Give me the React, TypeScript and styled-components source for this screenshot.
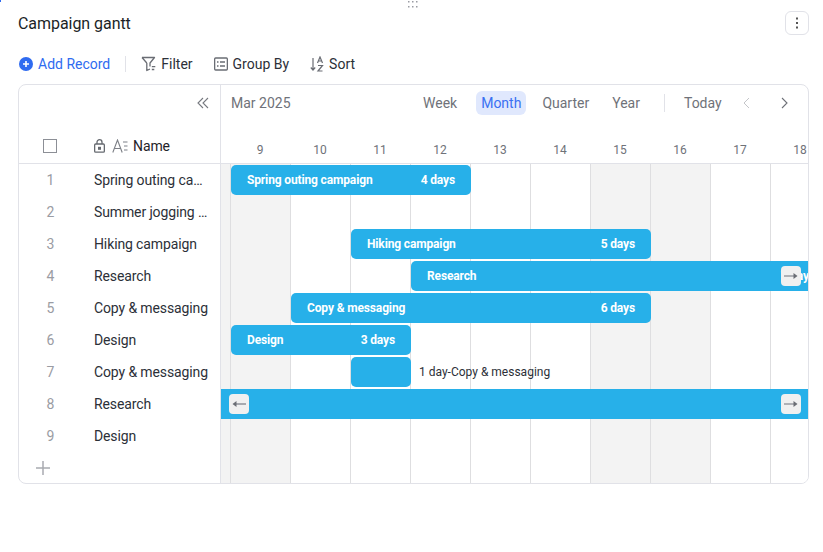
import React from "react";
import styled, { createGlobalStyle } from "styled-components";

const Global = createGlobalStyle`
  html, body { margin: 0; padding: 0; background: #fff; }
  body { font-family: Roboto, "Liberation Sans", sans-serif; color: #1f2329; }
  * { box-sizing: border-box; }
`;

const Page = styled.div`
  position: relative;
  width: 823px;
  height: 552px;
  padding: 0 14px 0 18px;
  overflow: hidden;
`;
const CornerMark = styled.div`
  position: absolute;
  left: 0;
  top: 0;
  width: 1px;
  height: 2px;
  background: #2f6bf0;
`;
const DragHandle = styled.svg`
  position: absolute;
  left: 408px;
  top: 1px;
`;
const TitleRow = styled.div`
  height: 46px;
  padding-top: 11px;
  display: flex;
  justify-content: space-between;
  align-items: flex-start;
`;
const Title = styled.div`
  font-size: 16px;
  line-height: 26px;
  letter-spacing: -0.05px;
  color: #1b1f26;
`;
const MoreButton = styled.div`
  width: 24px;
  height: 24px;
  border: 1px solid #e1e2e8;
  border-radius: 6px;
  display: flex;
  align-items: center;
  justify-content: center;
`;
const Toolbar = styled.div`
  height: 38px;
  padding: 0 0 2px 1px;
  display: flex;
  align-items: center;
`;
const ToolItem = styled.div<{ $blue?: boolean; $mr: number }>`
  display: flex;
  align-items: center;
  gap: 5px;
  font-size: 14px;
  color: ${(p) => (p.$blue ? "#2f6bf0" : "#2c3038")};
  margin-right: ${(p) => p.$mr}px;
`;
const ToolDivider = styled.div`
  width: 1px;
  height: 16px;
  background: #e1e2e8;
  margin-right: 15px;
`;
const Card = styled.div`
  width: 791px;
  height: 400px;
  border: 1px solid #e1e2e8;
  border-radius: 8px;
  display: flex;
  overflow: hidden;
`;
const LeftPane = styled.div`
  width: 202px;
  flex: none;
  border-right: 1px solid #e1e2e8;
`;
const LeftHeader = styled.div`
  height: 79px;
  border-bottom: 1px solid #e1e2e8;
  display: flex;
  flex-direction: column;
`;
const CollapseRow = styled.div`
  height: 36px;
  display: flex;
  justify-content: flex-end;
  align-items: center;
  padding-right: 11px;
`;
const ColumnRow = styled.div`
  height: 42px;
  display: flex;
  align-items: center;
  padding: 7px 0 0 24px;
`;
const CheckBox = styled.div`
  width: 14px;
  height: 14px;
  border: 1px solid #8c8f96;
  margin-right: 37px;
`;
const IconGap = styled.span`
  width: 7px;
`;
const NameLabel = styled.span`
  font-size: 14px;
  letter-spacing: -0.1px;
  color: #1f2329;
  margin-left: 5px;
`;
const Row = styled.div`
  height: 32px;
  display: flex;
  align-items: center;
`;
const RowNumber = styled.div`
  width: 63px;
  text-align: center;
  font-size: 14px;
  color: #9a9ca3;
`;
const RowName = styled.div`
  margin-left: 12px;
  width: 115px;
  font-size: 14px;
  letter-spacing: -0.12px;
  color: #2c3038;
  white-space: nowrap;
  overflow: hidden;
  text-overflow: ellipsis;
`;
const AddRow = styled.div`
  height: 31px;
  padding-left: 17px;
  display: flex;
  align-items: center;
`;
const RightPane = styled.div`
  flex: 1;
  min-width: 0;
  display: flex;
  flex-direction: column;
`;
const RightHeader = styled.div`
  height: 79px;
  flex: none;
  border-bottom: 1px solid #e1e2e8;
  overflow: hidden;
`;
const Controls = styled.div`
  height: 36px;
  display: flex;
  align-items: center;
  padding-left: 10px;
  font-size: 14px;
  color: #6f7279;
`;
const Month = styled.div`
  width: 187px;
`;
const Scale = styled.div<{ $active?: boolean; $mr: number }>`
  height: 24px;
  line-height: 24px;
  padding: 0 5px;
  border-radius: 6px;
  background: ${(p) => (p.$active ? "#e0e8fd" : "transparent")};
  color: ${(p) => (p.$active ? "#3a70f2" : "#6f7279")};
  margin-right: ${(p) => p.$mr}px;
`;
const ControlDivider = styled.div`
  width: 1px;
  height: 18px;
  background: #e1e2e8;
  margin-right: 19px;
`;
const TodayLabel = styled.div`
  margin-right: 21px;
`;
const Chevrons = styled.div`
  display: flex;
  align-items: center;
  gap: 29px;
`;
const Dates = styled.div`
  display: grid;
  grid-template-columns: 9px repeat(14, 60px);
  height: 42px;
  padding-top: 17px;
  font-size: 12px;
  line-height: 24px;
  color: #6f7279;
  text-align: center;
`;
const Timeline = styled.div`
  position: relative;
  flex: 1;
  overflow: hidden;
`;
const ColumnGuides = styled.div`
  position: absolute;
  inset: 0;
  display: grid;
  grid-template-columns: 9px repeat(14, 60px);
`;
const Guide = styled.div<{ $off?: boolean; $first?: boolean }>`
  background: ${(p) => (p.$off ? "#f3f3f3" : "#fff")};
  border-left: ${(p) => (p.$first ? "none" : "1px solid #dedee0")};
`;
const BarRow = styled.div`
  position: relative;
  height: 32px;
  display: grid;
  grid-template-columns: 9px repeat(14, 60px);
  align-items: center;
`;
const Bar = styled.div<{ $from: number; $to: number; $sharp?: boolean }>`
  grid-column: ${(p) => p.$from} / ${(p) => p.$to};
  grid-row: 1;
  height: 30px;
  margin-left: ${(p) => (p.$sharp ? "0" : "1px")};
  margin-right: ${(p) => (p.$sharp ? "0" : "-1px")};
  background: #27b0e9;
  border-radius: ${(p) => (p.$sharp ? "0" : "5px")};
  display: flex;
  justify-content: space-between;
  align-items: center;
  padding: 0 16px 0 16px;
  color: #fff;
  font-size: 12px;
  font-weight: 700;
  letter-spacing: -0.14px;
  white-space: nowrap;
`;
const BarSideLabel = styled.div<{ $from: number }>`
  grid-column: ${(p) => p.$from} / -1;
  grid-row: 1;
  font-size: 12px;
  color: #2c3038;
  padding-left: 9px;
  white-space: nowrap;
`;
const ScrollHint = styled.div<{ $side: "left" | "right" }>`
  position: absolute;
  top: 6px;
  ${(p) => (p.$side === "left" ? "left: 8px;" : "left: 560px;")}
  width: 20px;
  height: 20px;
  border-radius: 4px;
  background: #f0f0f0;
  display: flex;
  align-items: center;
  justify-content: center;
`;

const names = [
  "Spring outing campaign",
  "Summer jogging campaign",
  "Hiking campaign",
  "Research",
  "Copy & messaging",
  "Design",
  "Copy & messaging",
  "Research",
  "Design",
];
const dayLabels = [9, 10, 11, 12, 13, 14, 15, 16, 17, 18, 19, 20, 21, 22];
const offDays = [0, 1, 7, 8, 14];

const Plus = () => (
  <svg width="14" height="14" viewBox="0 0 14 14">
    <circle cx="7" cy="7" r="7" fill="#2f6bf0" />
    <path d="M7 4v6M4 7h6" stroke="#fff" strokeWidth="1.6" />
  </svg>
);
const FilterIcon = () => (
  <svg width="15" height="16" viewBox="0 0 15 16" fill="none" stroke="#6a6d74" strokeWidth="1.3">
    <path d="M1 1.500h12.500L9 7v3.500M5.800 7v7.500L9 13M1 1.500 5.800 7" strokeLinejoin="round" />
    <path d="M10.800 10.700h3.500M10.800 13.500h2.500" />
  </svg>
);
const GroupIcon = () => (
  <svg width="14" height="14" viewBox="0 0 14 14" fill="none" stroke="#6a6d74" strokeWidth="1.3">
    <rect x="0.650" y="1" width="12.700" height="12" rx="1" />
    <path d="M3 5h1.500M6 5h5M3 9h1.500M6 9h5" />
  </svg>
);
const SortIcon = () => (
  <svg width="14" height="16" viewBox="0 0 14 16" fill="none" stroke="#6a6d74" strokeWidth="1.2">
    <path d="M3 2v12M.8 11.500 3 14l2.200-2.500" />
    <path d="M7.500 7 10 1l2.500 6M8.300 5h3.400" />
    <path d="M8 9.500h4.500L8 15h4.500" />
  </svg>
);
const LockIcon = () => (
  <svg width="11" height="14" viewBox="0 0 11 14" fill="none" stroke="#666a70" strokeWidth="1.300">
    <rect x="0.650" y="5" width="9.700" height="8.200" rx="1" />
    <path d="M3 5V3.200a2.500 2.500 0 0 1 5 0V5" />
    <rect x="4" y="7.800" width="3" height="3" fill="#666a70" stroke="none" />
  </svg>
);
const TextFieldIcon = () => (
  <svg width="16" height="14" viewBox="0 0 16 14" fill="none" stroke="#7d8087" strokeWidth="1.100">
    <path d="M.8 13.500 5.500 1l4.700 12.500M2.500 9.500h6" />
    <path d="M11 3h4.500M12 7h3.500M12 11h3.500" />
  </svg>
);
const ArrowIcon = ({ left }: { left?: boolean }) => (
  <svg width="16" height="10" viewBox="0 0 16 10" style={left ? { transform: "scaleX(-1)" } : undefined}>
    <path d="M1 5h10" stroke="#9a9ca3" strokeWidth="1.700" />
    <path d="M10.500 2v6l4-3z" fill="#6a6d74" />
  </svg>
);

export default function App() {
  return (
    <Page>
      <Global />
      <CornerMark />
      <DragHandle width="12" height="7" viewBox="0 0 12 7" fill="#9a9ca3">
        {[0, 4, 8].map((x) =>
          [0, 5].map((y) => <rect key={`${x}-${y}`} x={x} y={y} width="1.500" height="1.500" />)
        )}
      </DragHandle>
      <TitleRow>
        <Title>Campaign gantt</Title>
        <MoreButton>
          <svg width="4" height="12" viewBox="0 0 4 12" fill="#555">
            <rect x="1" y="0.500" width="2" height="2" />
            <rect x="1" y="5" width="2" height="2" />
            <rect x="1" y="9.500" width="2" height="2" />
          </svg>
        </MoreButton>
      </TitleRow>
      <Toolbar>
        <ToolItem $blue $mr={15}>
          <Plus />
          Add Record
        </ToolItem>
        <ToolDivider />
        <ToolItem $mr={21}>
          <FilterIcon />
          Filter
        </ToolItem>
        <ToolItem $mr={21}>
          <GroupIcon />
          Group By
        </ToolItem>
        <ToolItem $mr={0}>
          <SortIcon />
          Sort
        </ToolItem>
      </Toolbar>
      <Card>
        <LeftPane>
          <LeftHeader>
            <CollapseRow>
              <svg width="12" height="12" viewBox="0 0 12 12" fill="none" stroke="#777a80" strokeWidth="1.100">
                <path d="M6 1 1 6l5 5M11 1 6 6l5 5" />
              </svg>
            </CollapseRow>
            <ColumnRow>
              <CheckBox />
              <LockIcon />
              <IconGap />
              <TextFieldIcon />
              <NameLabel>Name</NameLabel>
            </ColumnRow>
          </LeftHeader>
          {names.map((n, i) => (
            <Row key={i}>
              <RowNumber>{i + 1}</RowNumber>
              <RowName>{n}</RowName>
            </Row>
          ))}
          <AddRow>
            <svg width="14" height="14" viewBox="0 0 14 14" stroke="#a8aab0" strokeWidth="1.500">
              <path d="M7 0v14M0 7h14" />
            </svg>
          </AddRow>
        </LeftPane>
        <RightPane>
          <RightHeader>
            <Controls>
              <Month>Mar 2025</Month>
              <Scale $mr={14}>Week</Scale>
              <Scale $active $mr={11}>Month</Scale>
              <Scale $mr={13}>Quarter</Scale>
              <Scale $mr={19}>Year</Scale>
              <ControlDivider />
              <TodayLabel>Today</TodayLabel>
              <Chevrons>
                <svg width="8" height="12" viewBox="0 0 8 12" fill="none" stroke="#c4c5c9" strokeWidth="1">
                  <path d="M6 1 1 6l5 5" />
                </svg>
                <svg width="8" height="12" viewBox="0 0 8 12" fill="none" stroke="#6f7279" strokeWidth="1.100">
                  <path d="M2 1l5 5-5 5" />
                </svg>
              </Chevrons>
            </Controls>
            <Dates>
              <span />
              {dayLabels.map((d) => (
                <span key={d}>{d}</span>
              ))}
            </Dates>
          </RightHeader>
          <Timeline>
            <ColumnGuides>
              {Array.from({ length: 15 }).map((_, i) => (
                <Guide key={i} $first={i === 0} $off={offDays.includes(i)} />
              ))}
            </ColumnGuides>
            <BarRow>
              <Bar $from={2} $to={6}>
                <span>Spring outing campaign</span>
                <span>4 days</span>
              </Bar>
            </BarRow>
            <BarRow />
            <BarRow>
              <Bar $from={4} $to={9}>
                <span>Hiking campaign</span>
                <span>5 days</span>
              </Bar>
            </BarRow>
            <BarRow>
              <Bar $from={5} $to={12}>
                <span>Research</span>
                <span>7 days</span>
              </Bar>
              <ScrollHint $side="right">
                <ArrowIcon />
              </ScrollHint>
            </BarRow>
            <BarRow>
              <Bar $from={3} $to={9}>
                <span>Copy &amp; messaging</span>
                <span>6 days</span>
              </Bar>
            </BarRow>
            <BarRow>
              <Bar $from={2} $to={5}>
                <span>Design</span>
                <span>3 days</span>
              </Bar>
            </BarRow>
            <BarRow>
              <Bar $from={4} $to={5} />
              <BarSideLabel $from={5}>1 day-Copy &amp; messaging</BarSideLabel>
            </BarRow>
            <BarRow>
              <Bar $from={1} $to={-1} $sharp />
              <ScrollHint $side="left">
                <ArrowIcon left />
              </ScrollHint>
              <ScrollHint $side="right">
                <ArrowIcon />
              </ScrollHint>
            </BarRow>
          </Timeline>
        </RightPane>
      </Card>
    </Page>
  );
}
